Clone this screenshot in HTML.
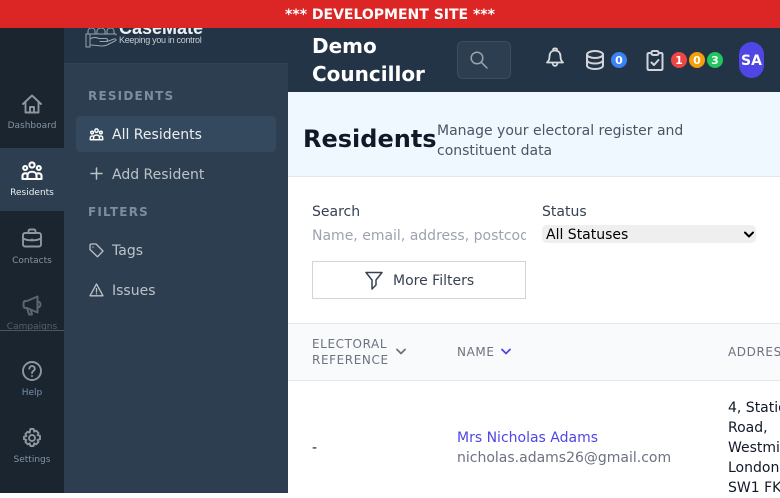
<!DOCTYPE html>
<html>
<head>
<meta charset="utf-8">
<style>
html,body{margin:0;padding:0;width:780px;height:493px;overflow:hidden;background:#fff;font-family:"DejaVu Sans",sans-serif}
.a{position:absolute;white-space:nowrap}
svg{position:absolute;fill:none;stroke-linecap:round;stroke-linejoin:round}
.rl{position:absolute;left:0;width:64px;text-align:center;font-size:9px;color:#8494a5;line-height:11px}
.sb{position:absolute;font-size:14px;line-height:18px;color:#bdc3c7;white-space:nowrap}
.sh{position:absolute;left:88px;font-size:12px;font-weight:700;letter-spacing:1.2px;color:#7f8c9b;line-height:14px}
.bd{position:absolute;top:52px;width:16px;height:16px;border-radius:50%;color:#fff;font-size:11px;font-weight:700;line-height:17px;text-align:center}
</style>
</head>
<body>
<div class="a" style="left:288px;top:92px;width:492px;height:84px;background:#f0f8ff;border-bottom:1px solid #e5e7eb"></div>

<!-- rail -->
<div class="a" style="left:0;top:28px;width:64px;height:465px;background:#1a252f"></div>
<div class="a" style="left:0;top:148px;width:64px;height:63px;background:#2c3e50"></div>
<!-- sidebar -->
<div class="a" style="left:64px;top:28px;width:224px;height:465px;background:#2c3e50"></div>
<div class="a" style="left:64px;top:28px;width:224px;height:35px;background:#243447;border-bottom:1px solid #2f4153"></div>
<!-- logo -->
<div class="a" style="left:119px;top:18px;font:700 18px/20px 'Liberation Sans',sans-serif;color:#ecf0f1">CaseMate</div>
<div class="a" style="left:119px;top:34px;font:9px/12px 'Liberation Sans',sans-serif;color:#c5cbd1;letter-spacing:-.3px">Keeping you in control</div>
<svg style="left:85px;top:24px" width="32" height="25" viewBox="0 0 32 25" stroke="#9aa4ae" stroke-width="1">
<path d="M1 23V10h30v1M1 23h4V10M5 15c3-2 6-2 9-.5h7c2 0 2 3 0 3h-6m7 0 7-2.500c2-.5 3 1 1 2l-8 4c-3 1.500-7 1-10 .5l-6-.5"/>
<path d="M3 10V7c0-4 7-4 7 0v3M12 10V7c0-4 8-4 8 0v3M22 10V7c0-4 7-4 7 0v3"/>
</svg>
<!-- banner -->
<div class="a" style="left:0;top:0;width:780px;height:28px;background:#dc2626;color:#fff;font-size:14px;font-weight:700;line-height:30px;text-align:center">*** DEVELOPMENT SITE ***</div>

<!-- rail icons -->
<svg style="left:22px;top:94px" width="20" height="20" viewBox="0 0 20 20" stroke="#8f969e" stroke-width="1.900"><path d="M1 10 10 1.500 19 10M3.500 8v10.500h13V8M8 18.500V13h4v5.500"/></svg>
<div class="rl" style="top:121px">Dashboard</div>
<svg style="left:21px;top:161px" width="22" height="20" viewBox="0 0 22 20" stroke="#fff" stroke-width="2.100"><circle cx="11" cy="4" r="2.600"/><circle cx="4.200" cy="7" r="2"/><circle cx="17.800" cy="7" r="2"/><path d="M6.500 18v-3.500c0-5 9-5 9 0V18zM1.500 18v-3c0-2.200 2-3 4-2.600M20.500 18v-3c0-2.200-2-3-4-2.600M1.500 18h19"/></svg>
<div class="rl" style="top:188px;color:#ecf0f1">Residents</div>
<svg style="left:22px;top:228px" width="20" height="20" viewBox="0 0 20 20" stroke="#8f969e" stroke-width="1.900"><rect x="1" y="5" width="18" height="13.500" rx="2"/><path d="M6.500 5V3c0-1 .8-1.500 1.500-1.500h4c.7 0 1.500.5 1.500 1.500v2M1 10.500c5 2.500 13 2.500 18 0M10 11.500v.5"/></svg>
<div class="rl" style="top:256px">Contacts</div>
<svg style="left:22px;top:295px" width="20" height="21" viewBox="0 0 20 21" stroke="#5d666f" stroke-width="2"><path d="M15.500 1.500 5 6H3C1 6 1 13 3 13h2l10.500 4.500zM15.500 6.500c4 0 4 6 0 6M5 13l2 6.500h3L8.500 14.400"/></svg>
<div class="a" style="left:0;top:322px;width:64px;height:8px;overflow:hidden;text-align:center;font-size:9px;line-height:11px;color:#56616d">Campaigns</div>
<div class="a" style="left:0;top:330px;width:64px;height:1px;background:#4b5563"></div>
<svg style="left:22px;top:361px" width="20" height="20" viewBox="0 0 20 20" stroke="#8f969e" stroke-width="1.900"><circle cx="10" cy="10" r="9"/><path d="M7.300 7.700c0-3.500 5.500-3.500 5.500 0 0 2.200-2.800 2.200-2.800 4.300M10 15v.1"/></svg>
<div class="rl" style="top:388px;color:#7c93ab">Help</div>
<svg style="left:22px;top:428px" width="20" height="20" viewBox="0 0 20 20" stroke="#8f969e" stroke-width="1.900"><path d="M8.400 1h3.200l.6 2.600 2-.9 2.300 2.300-1 2 2.500.8v3.400l-2.500.8 1 2-2.300 2.300-2-1-.7 2.700H8.400l-.7-2.700-2 1-2.300-2.300 1-2-2.400-.8V8.800l2.400-.8-1-2 2.300-2.300 2 .9z"/><circle cx="10" cy="10" r="3"/></svg>
<div class="rl" style="top:455px">Settings</div>

<!-- sidebar menu -->
<div class="sh" style="top:89px">RESIDENTS</div>
<div class="a" style="left:76px;top:116px;width:200px;height:36px;background:#34495e;border-radius:4px"></div>
<svg style="left:89px;top:128px" width="15" height="13" viewBox="0 0 22 20" stroke="#fff" stroke-width="2.300"><circle cx="11" cy="4" r="2.600"/><circle cx="4.200" cy="7" r="2"/><circle cx="17.800" cy="7" r="2"/><path d="M6.500 18v-3.500c0-5 9-5 9 0V18zM1.500 18v-3c0-2.200 2-3 4-2.600M20.500 18v-3c0-2.200-2-3-4-2.600M1.500 18h19"/></svg>
<div class="sb" style="left:112px;top:126px;color:#ecf0f1">All Residents</div>
<svg style="left:90px;top:167px" width="13" height="13" viewBox="0 0 13 13" stroke="#bdc3c7" stroke-width="1.500"><path d="M6.500 1v11M1 6.500h11"/></svg>
<div class="sb" style="left:112px;top:166px">Add Resident</div>
<div class="sh" style="top:205px">FILTERS</div>
<svg style="left:89px;top:243px" width="15" height="15" viewBox="0 0 15 15" stroke="#bdc3c7" stroke-width="1.300"><path d="M1 2.500C1 1.500 1.500 1 2.500 1H7l7 7-5.500 5.800L1 6.500zM4 4v.1"/></svg>
<div class="sb" style="left:112px;top:242px">Tags</div>
<svg style="left:89px;top:283px" width="15" height="14" viewBox="0 0 15 14" stroke="#bdc3c7" stroke-width="1.300"><path d="M7.500 1 14 12.800H1zM7.500 5.500V9M7.500 10.800v.1"/></svg>
<div class="sb" style="left:112px;top:282px">Issues</div>

<!-- top header -->
<div class="a" style="left:288px;top:28px;width:492px;height:64px;background:#243447"></div>
<div class="a" style="left:312px;top:32px;font-size:20px;font-weight:700;line-height:28px;color:#fff">Demo<br>Councillor</div>
<div class="a" style="left:457px;top:41px;width:52px;height:36px;background:#2c3e50;border:1px solid #3d4d5e;border-radius:6px"></div>
<svg style="left:470px;top:51px" width="18" height="18" viewBox="0 0 18 18" stroke="#9ca3af" stroke-width="1.500"><circle cx="7" cy="7" r="5.800"/><path d="M11.200 11.200 17 17"/></svg>
<svg style="left:545px;top:47px" width="20" height="21" viewBox="0 0 20 21" stroke="#d8dbe0" stroke-width="1.800"><path d="M2 15.500c1.800-1.500 2.500-3 2.500-6 0-3.500 2-6 5.500-6s5.500 2.500 5.500 6c0 3 .7 4.500 2.500 6zM8 2.500C8 1 12 1 12 2.500M7.500 15.500c0 4.500 5 4.500 5 0"/></svg>
<svg style="left:585px;top:50px" width="20" height="20" viewBox="0 0 20 20" stroke="#d1d5db" stroke-width="2"><ellipse cx="10" cy="4.500" rx="8" ry="3.500"/><path d="M2 4.500v11c0 2 3.500 3.500 8 3.500s8-1.500 8-3.500v-11M2 10c0 2 3.500 3.500 8 3.500s8-1.500 8-3.500"/></svg>
<div class="bd" style="left:611px;background:#3b82f6">0</div>
<svg style="left:646px;top:50px" width="18" height="21" viewBox="0 0 18 21" stroke="#d1d5db" stroke-width="2"><path d="M5.500 3H3C2 3 1.500 3.600 1.500 4.500v14c0 1 .5 1.500 1.500 1.500h12c1 0 1.500-.5 1.500-1.500v-14c0-.9-.5-1.500-1.500-1.500h-2.500"/><rect x="5.500" y="1" width="7" height="4" rx="1.500"/><path d="M5.500 12.500 8 15l4.500-5"/></svg>
<div class="bd" style="left:671px;background:#ef4444">1</div>
<div class="bd" style="left:689px;background:#f59e0b">0</div>
<div class="bd" style="left:707px;background:#22c55e">3</div>
<div class="a" style="left:739px;top:42px;width:25px;height:36px;border-radius:13px;background:#4f46e5;color:#fff;font-size:14px;font-weight:700;line-height:38px;text-align:center">SA</div>

<!-- page head -->
<div class="a" style="left:303px;top:123px;font-size:24px;font-weight:700;line-height:32px;color:#111827">Residents</div>
<div class="a" style="left:437px;top:121px;font-size:14px;line-height:20px;color:#4b5563">Manage your electoral register and<br>constituent data</div>

<!-- filters -->
<div class="a" style="left:312px;top:203px;font-size:14px;line-height:18px;color:#374151">Search</div>
<div class="a" style="left:312px;top:226px;width:214px;height:20px;overflow:hidden;font-size:14px;line-height:20px;color:#9ca3af">Name, email, address, postcode</div>
<div class="a" style="left:542px;top:203px;font-size:14px;line-height:18px;color:#374151">Status</div>
<div class="a" style="left:542px;top:225px;width:214px;height:18px;background:#efefef;border-radius:5px;font-size:14px;line-height:20px;color:#000;text-indent:4px">All Statuses</div>
<svg style="left:744px;top:231px" width="10" height="7" viewBox="0 0 10 7" stroke="#000" stroke-width="2"><path d="M1 1.500 5 5.500 9 1.500"/></svg>
<div class="a" style="left:312px;top:261px;width:212px;height:36px;border:1px solid #d1d5db;background:#fff"></div>
<svg style="left:365px;top:271px" width="18" height="19" viewBox="0 0 18 19" stroke="#374151" stroke-width="1.500"><path d="M1 1.500h16L11 9v5l-4 4V9z"/></svg>
<div class="a" style="left:393px;top:272px;font-size:14px;line-height:18px;color:#374151">More Filters</div>

<!-- table -->
<div class="a" style="left:288px;top:323px;width:492px;height:56px;background:#f9fafb;border-top:1px solid #e5e7eb;border-bottom:1px solid #e5e7eb"></div>
<div class="a" style="left:312px;top:336px;font-size:12px;line-height:16px;letter-spacing:.6px;color:#6b7280">ELECTORAL<br>REFERENCE</div>
<svg style="left:396px;top:348px" width="10" height="7" viewBox="0 0 10 7" stroke="#6b7280" stroke-width="1.800"><path d="M1 1.500 5 5.500 9 1.500"/></svg>
<div class="a" style="left:457px;top:344px;font-size:12px;line-height:16px;letter-spacing:.6px;color:#6b7280">NAME</div>
<svg style="left:501px;top:348px" width="10" height="7" viewBox="0 0 10 7" stroke="#4f46e5" stroke-width="1.800"><path d="M1 1.500 5 5.500 9 1.500"/></svg>
<div class="a" style="left:728px;top:344px;font-size:12px;line-height:16px;letter-spacing:.6px;color:#6b7280">ADDRESS</div>
<div class="a" style="left:312px;top:438px;font-size:14px;line-height:20px;color:#111827">-</div>
<div class="a" style="left:457px;top:428px;font-size:14px;line-height:20px;color:#4f46e5">Mrs Nicholas Adams</div>
<div class="a" style="left:457px;top:448px;font-size:14px;line-height:20px;color:#6b7280">nicholas.adams26@gmail.com</div>
<div class="a" style="left:728px;top:398px;font-size:14px;line-height:20px;color:#111827">4, Station<br>Road,<br>Westminster<br>London<br>SW1 FK</div>
</body>
</html>
